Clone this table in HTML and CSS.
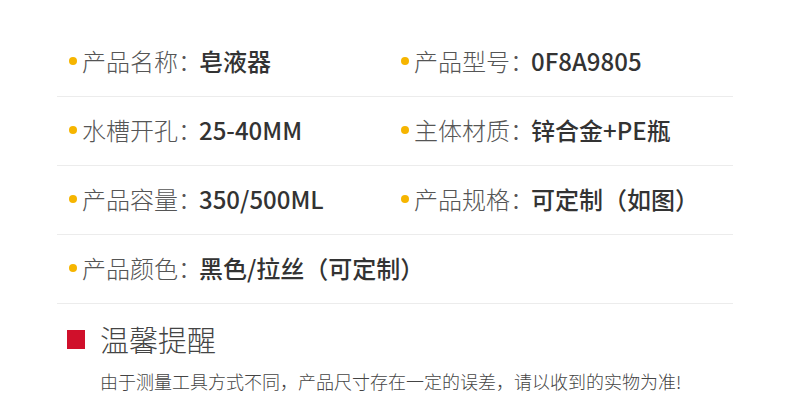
FILE: index.html
```html
<!DOCTYPE html>
<html lang="zh-CN">
<head>
<meta charset="utf-8">
<link rel="stylesheet" href="styles.css">
</head>
<body>
<div class="page">
  <div class="specs">
    <div class="row">
      <div class="cell"><span class="dot"></span><span class="label">产品名称：</span><span class="value">皂液器</span></div>
      <div class="cell"><span class="dot"></span><span class="label">产品型号：</span><span class="value">0F8A9805</span></div>
    </div>
    <div class="row">
      <div class="cell"><span class="dot"></span><span class="label">水槽开孔：</span><span class="value">25-40MM</span></div>
      <div class="cell"><span class="dot"></span><span class="label">主体材质：</span><span class="value">锌合金+PE瓶</span></div>
    </div>
    <div class="row">
      <div class="cell"><span class="dot"></span><span class="label">产品容量：</span><span class="value">350/500ML</span></div>
      <div class="cell"><span class="dot"></span><span class="label">产品规格：</span><span class="value">可定制（如图）</span></div>
    </div>
    <div class="row">
      <div class="cell"><span class="dot"></span><span class="label">产品颜色：</span><span class="value">黑色/拉丝（可定制）</span></div>
    </div>
  </div>
  <div class="notice">
    <div class="notice-title"><span class="square"></span><span>温馨提醒</span></div>
    <p class="notice-text">由于测量工具方式不同，产品尺寸存在一定的误差，请以收到的实物为准!</p>
  </div>
</div>
</body>
</html>
```
FILE: styles.css
```css
html, body {
  margin: 0;
  padding: 0;
  background: #ffffff;
}
body {
  font-family: "Noto Sans CJK SC", "Noto Sans", sans-serif;
}
.page {
  width: 790px;
  height: 406px;
  padding-top: 28px;
  box-sizing: border-box;
  overflow: hidden;
}
.specs {
  margin-left: 57px;
  width: 676px;
}
.row {
  display: flex;
  height: 69px;
  padding-bottom: 3px;
  border-bottom: 1px solid #ececec;
  box-sizing: border-box;
  align-items: center;
}
.cell {
  width: 332px;
  display: flex;
  align-items: center;
  padding-left: 12px;
  box-sizing: border-box;
  font-size: 24px;
  line-height: 30px;
  white-space: pre;
}
.dot {
  width: 8px;
  height: 8px;
  border-radius: 50%;
  background: #f6b500;
  margin-right: 5px;
  flex: none;
}
.label {
  color: #555555;
  font-weight: 300;
}
.value {
  color: #333333;
  font-weight: 500;
  margin-left: -3px;
}
.notice {
  padding-left: 67px;
}
.notice-title {
  display: flex;
  align-items: center;
  margin-top: 16px;
  font-size: 29px;
  line-height: 38px;
  color: #444444;
  font-weight: 300;
}
.square {
  width: 18px;
  height: 19px;
  background: #d0102b;
  margin-right: 15px;
  flex: none;
}
.notice-text {
  margin: 11px 0 0 33px;
  font-size: 18px;
  line-height: 24px;
  color: #444444;
  font-weight: 300;
}
```
